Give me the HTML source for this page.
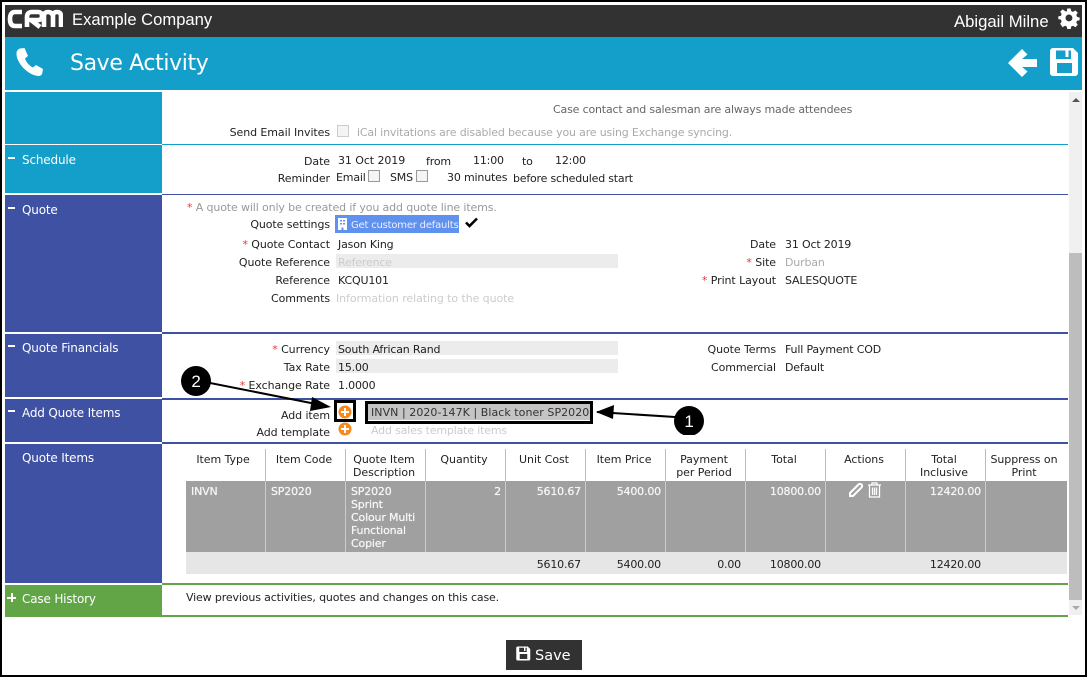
<!DOCTYPE html>
<html><head><meta charset="utf-8"><style>
html,body{margin:0;padding:0;background:#fff}
#p{position:relative;width:1087px;height:677px;overflow:hidden;background:#fff;font:11px/14px "DejaVu Sans",sans-serif;color:#222;letter-spacing:-.17px}
#p div,#p svg{position:absolute}
.t{white-space:nowrap;margin-top:1px}
.r{white-space:nowrap;text-align:right;width:200px;margin-top:1px;letter-spacing:-.08px}
.c{white-space:nowrap;text-align:center;width:80px;margin-top:1px;letter-spacing:-.05px}
.g{color:#aaa}
.s{color:#e33}
.w{color:#fff;font-size:12px}
.gy{background:#ececec;height:14px}
.cb{width:10px;height:10px;border:1px solid #999;background:#f4f4f4}
.d{width:1px;background:#bbb}
#p .e{color:#f6f6f6;text-shadow:0 0 .6px #fff;letter-spacing:-.17px}
</style></head><body><div id="p">
<div style="left:0;top:0;width:1087px;height:2px;background:#000"></div>
<div style="left:0;top:2px;width:2px;height:675px;background:#000"></div>
<div style="left:1085px;top:2px;width:2px;height:675px;background:#000"></div>
<div style="left:0;top:675px;width:1087px;height:2px;background:#000"></div>
<div style="left:2px;top:2px;width:1083px;height:3px;background:#fff"></div>

<div style="left:5px;top:5px;width:1077px;height:32px;background:#323232"></div>
<div style="left:5px;top:37px;width:1077px;height:53px;background:#149fca"></div>

<svg style="left:7px;top:9px" width="56" height="20" viewBox="0 0 56 20"><path d="M15 3H8Q3 3 3 10T8 17H15M20 18V8Q20 3 25 3H31Q35 3 35 7T31 11H24L33 18M37 18V7Q37 3 41 3T46 7V18M46 7Q46 3 50 3T54 7V18" fill="none" stroke="#fff" stroke-width="4.600"/></svg>
<div class="t" style="left:72px;top:9px;font:16.600px/20px 'Liberation Sans',sans-serif;color:#fff;letter-spacing:0">Example Company</div>
<div class="t" style="left:954px;top:11px;font:16.700px/20px 'Liberation Sans',sans-serif;color:#fff;letter-spacing:0">Abigail Milne</div>
<svg style="left:1058px;top:7px" width="22" height="22" viewBox="0 0 22 22"><path fill="#fff" fill-rule="evenodd" d="M9 0h4l.6 3 2.200.9L18.400 2.200l2.800 2.800-1.700 2.600.9 2.200 3 .6v3.200l-3 .6-.9 2.200 1.700 2.600-2.800 2.800-2.600-1.700-2.200.9-.6 3H9l-.6-3-2.200-.9-2.600 1.700L.8 17.800l1.700-2.600-.9-2.200-3-.6V9.200l3-.6.9-2.200L.8 3.800 3.600 1 6.200 2.700 8.400 3.800zM11 7a4 4 0 1 0 0 8 4 4 0 0 0 0-8z" transform="translate(1.500 1.500) scale(.86)"/></svg>

<svg style="left:15px;top:47px" width="30" height="30" viewBox="0 0 30 30"><path fill="#fff" d="M5 1.500 9.500 1l3.500 8-3 2.500c1 3.500 4.500 7.500 8 9l3-2.500 7 4-.8 4.500c-.4 1.500-2 2.500-4 2.500C12.500 28 1 15.500 1.500 6 1.600 3.800 3 2 5 1.500z"/></svg>
<div class="t" style="left:70px;top:49px;font-size:22px;line-height:27px;color:#fff;letter-spacing:-.38px">Save Activity</div>
<svg style="left:1008px;top:48px" width="30" height="30" viewBox="0 0 30 30"><path fill="#fff" d="M0 15 14 1l5.500 5.500L14 11h15v8H14l5.500 4.500L14 29z"/></svg>
<svg style="left:1050px;top:47px" width="29" height="30" viewBox="0 0 29 30"><path fill="#fff" fill-rule="evenodd" d="M3 1h20l5 5v20a3 3 0 0 1-3 3H3a3 3 0 0 1-3-3V4a3 3 0 0 1 3-3zM6 3.500V12h15V3.500h-2.500V10h-3V3.500zM7 16v10h15V16z"/></svg>

<!-- left column -->
<div style="left:5px;top:92px;width:157px;height:52px;background:#149fca"></div>
<div style="left:5px;top:145px;width:157px;height:48px;background:#149fca"></div>
<div style="left:5px;top:195px;width:157px;height:137px;background:#3f51a3"></div>
<div style="left:5px;top:334px;width:157px;height:63px;background:#3f51a3"></div>
<div style="left:5px;top:399px;width:157px;height:43px;background:#3f51a3"></div>
<div style="left:5px;top:444px;width:157px;height:139px;background:#3f51a3"></div>
<div style="left:5px;top:585px;width:157px;height:32px;background:#62a546"></div>

<div style="left:162px;top:144px;width:906px;height:1px;background:#149fca"></div>
<div style="left:162px;top:194px;width:906px;height:1px;background:#3f51a3"></div>
<div style="left:162px;top:332px;width:906px;height:2px;background:#3f51a3"></div>
<div style="left:162px;top:398px;width:906px;height:1.500px;background:#3f51a3"></div>
<div style="left:162px;top:442px;width:906px;height:2px;background:#3f51a3"></div>
<div style="left:162px;top:583px;width:906px;height:2px;background:#62a546"></div>
<div style="left:162px;top:615px;width:906px;height:2px;background:#62a546"></div>

<div style="left:8px;top:157px;width:7px;height:2px;background:#fff"></div>
<div style="left:8px;top:207px;width:7px;height:2px;background:#fff"></div>
<div style="left:8px;top:345px;width:7px;height:2px;background:#fff"></div>
<div style="left:8px;top:410px;width:7px;height:2px;background:#fff"></div>
<div style="left:7px;top:597px;width:9px;height:1.500px;background:#fff"></div>
<div style="left:11px;top:593px;width:1.500px;height:9px;background:#fff"></div>

<div class="t w" style="left:22px;top:152px">Schedule</div>
<div class="t w" style="left:22px;top:202px">Quote</div>
<div class="t w" style="left:22px;top:340px">Quote Financials</div>
<div class="t w" style="left:22px;top:405px">Add Quote Items</div>
<div class="t w" style="left:22px;top:450px">Quote Items</div>
<div class="t w" style="left:22px;top:591px">Case History</div>

<!-- scrollbar -->
<div style="left:1069px;top:92px;width:13px;height:523px;background:#f0f0f0"></div>
<div style="left:1069px;top:253px;width:13px;height:347px;background:#bdbdbd"></div>
<div style="left:1072px;top:98px;width:0;height:0;border-left:4px solid transparent;border-right:4px solid transparent;border-bottom:4px solid #555"></div>
<div style="left:1072px;top:606px;width:0;height:0;border-left:4px solid transparent;border-right:4px solid transparent;border-top:4px solid #aaa"></div>

<!-- invites -->
<div class="t" style="left:553px;top:102px;color:#666">Case contact and salesman are always made attendees</div>
<div class="r" style="left:130px;top:125px">Send Email Invites</div>
<div class="cb" style="left:337px;top:125px;border-color:#ccc"></div>
<div class="t g" style="left:357px;top:125px">iCal invitations are disabled because you are using Exchange syncing.</div>

<!-- schedule -->
<div class="r" style="left:130px;top:154px">Date</div>
<div class="t" style="left:338px;top:153px;letter-spacing:-.08px">31 Oct 2019</div>
<div class="t" style="left:426px;top:154px">from</div>
<div class="t" style="left:473px;top:153px">11:00</div>
<div class="t" style="left:522px;top:154px">to</div>
<div class="t" style="left:555px;top:153px">12:00</div>
<div class="r" style="left:130px;top:171px">Reminder</div>
<div class="t" style="left:336px;top:170px">Email</div>
<div class="cb" style="left:368px;top:170px"></div>
<div class="t" style="left:390px;top:170px">SMS</div>
<div class="cb" style="left:416px;top:170px"></div>
<div class="t" style="left:447px;top:170px">30 minutes</div>
<div class="t" style="left:513px;top:171px;letter-spacing:-.2px">before scheduled start</div>

<!-- quote -->
<div class="t g" style="left:187px;top:200px;color:#999;letter-spacing:-.13px"><span class="s">*</span> A quote will only be created if you add quote line items.</div>
<div class="r" style="left:130px;top:217px">Quote settings</div>
<div style="left:335px;top:215px;width:124px;height:18px;background:#5f92ee"></div>
<svg style="left:338px;top:218px" width="9" height="12" viewBox="0 0 9 12"><path fill="#fff" fill-rule="evenodd" d="M0 0h9v12H5.500V9.500h-2V12H0zM2 2v1.500h2V2zM5 2v1.500h2V2zM2 5v1.500h2V5zM5 5v1.500h2V5z"/></svg>
<div class="t" style="left:351px;top:218px;color:#eef;font-size:10px;letter-spacing:-.2px">Get customer defaults</div>
<svg style="left:465px;top:217px" width="13" height="11" viewBox="0 0 13 11"><path d="M1 5.500 4.500 9 12 1.500" fill="none" stroke="#000" stroke-width="2.600"/></svg>

<div class="r" style="left:130px;top:237px"><span class="s">*</span> Quote Contact</div>
<div class="t" style="left:338px;top:237px">Jason King</div>
<div class="r" style="left:130px;top:255px">Quote Reference</div>
<div class="gy" style="left:336px;top:254px;width:282px"></div>
<div class="t" style="left:338px;top:255px;color:#ccc">Reference</div>
<div class="r" style="left:130px;top:273px">Reference</div>
<div class="t" style="left:338px;top:273px">KCQU101</div>
<div class="r" style="left:130px;top:291px">Comments</div>
<div class="t" style="left:336px;top:291px;color:#ccc;letter-spacing:-.08px">Information relating to the quote</div>

<div class="r" style="left:576px;top:237px">Date</div>
<div class="t" style="left:785px;top:237px">31 Oct 2019</div>
<div class="r" style="left:576px;top:255px"><span class="s">*</span> Site</div>
<div class="t" style="left:785px;top:255px;color:#aaa">Durban</div>
<div class="r" style="left:576px;top:273px"><span class="s">*</span> Print Layout</div>
<div class="t" style="left:785px;top:273px">SALESQUOTE</div>

<!-- financials -->
<div class="r" style="left:130px;top:342px"><span class="s">*</span> Currency</div>
<div class="gy" style="left:336px;top:341px;width:282px"></div>
<div class="t" style="left:338px;top:342px">South African Rand</div>
<div class="r" style="left:130px;top:360px">Tax Rate</div>
<div class="gy" style="left:336px;top:359px;width:282px"></div>
<div class="t" style="left:338px;top:360px">15.00</div>
<div class="r" style="left:130px;top:378px"><span class="s">*</span> Exchange Rate</div>
<div class="t" style="left:338px;top:378px">1.0000</div>
<div class="r" style="left:576px;top:342px">Quote Terms</div>
<div class="t" style="left:785px;top:342px">Full Payment COD</div>
<div class="r" style="left:576px;top:360px">Commercial</div>
<div class="t" style="left:785px;top:360px">Default</div>

<!-- add items -->
<div class="r" style="left:130px;top:408px">Add item</div>
<div class="r" style="left:130px;top:425px">Add template</div>
<div style="left:334px;top:400px;width:16px;height:16px;border:3px solid #000"></div>
<svg style="left:338px;top:405px" width="14" height="14" viewBox="0 0 14 14"><circle cx="7" cy="7" r="6.500" fill="#f58a1f"/><path d="M3 7h8M7 3v8" stroke="#fff" stroke-width="2"/></svg>
<svg style="left:338px;top:422px" width="14" height="14" viewBox="0 0 14 14"><circle cx="7" cy="7" r="6.500" fill="#f58a1f"/><path d="M3 7h8M7 3v8" stroke="#fff" stroke-width="2"/></svg>
<div style="left:368px;top:404px;width:222px;height:16px;background:#c4c4c4"></div>
<div style="left:365px;top:401px;width:222px;height:17px;border:3px solid #000"></div>
<div class="t" style="left:371px;top:405px;color:#333;letter-spacing:.05px">INVN | 2020-147K | Black toner SP2020</div>
<div class="t" style="left:371px;top:423px;color:#ccc">Add sales template items</div>

<!-- annotations -->
<svg style="left:175px;top:365px" width="540" height="70" viewBox="0 0 540 70">
<path d="M20 15 146 40" stroke="#000" stroke-width="2"/>
<path d="M156 42 137 32 135 46z" fill="#000"/>
<path d="M422 47 500 52" stroke="#000" stroke-width="2"/>
<path d="M421 47 439 40 438 54z" fill="#000"/>
<circle cx="21" cy="16" r="15" fill="#000"/>
<circle cx="514" cy="56" r="15" fill="#000"/>
<text x="21" y="22" fill="#fff" font-family="Liberation Sans,sans-serif" font-size="17" text-anchor="middle">2</text>
<text x="514" y="62" fill="#fff" font-family="Liberation Sans,sans-serif" font-size="17" text-anchor="middle">1</text>
</svg>

<!-- table -->
<div style="left:186px;top:481px;width:881px;height:71px;background:#a0a0a0"></div>
<div style="left:186px;top:552px;width:881px;height:22px;background:#e6e6e6"></div>
<div class="d" style="left:265px;top:449px;height:32px"></div>
<div class="d" style="left:345px;top:449px;height:32px"></div>
<div class="d" style="left:425px;top:449px;height:32px"></div>
<div class="d" style="left:505px;top:449px;height:32px"></div>
<div class="d" style="left:585px;top:449px;height:32px"></div>
<div class="d" style="left:665px;top:449px;height:32px"></div>
<div class="d" style="left:745px;top:449px;height:32px"></div>
<div class="d" style="left:825px;top:449px;height:32px"></div>
<div class="d" style="left:905px;top:449px;height:32px"></div>
<div class="d" style="left:985px;top:449px;height:32px"></div>
<div class="d" style="left:265px;top:481px;height:71px;background:#ccc"></div>
<div class="d" style="left:345px;top:481px;height:71px;background:#ccc"></div>
<div class="d" style="left:425px;top:481px;height:71px;background:#ccc"></div>
<div class="d" style="left:505px;top:481px;height:71px;background:#ccc"></div>
<div class="d" style="left:585px;top:481px;height:71px;background:#ccc"></div>
<div class="d" style="left:665px;top:481px;height:71px;background:#ccc"></div>
<div class="d" style="left:745px;top:481px;height:71px;background:#ccc"></div>
<div class="d" style="left:825px;top:481px;height:71px;background:#ccc"></div>
<div class="d" style="left:905px;top:481px;height:71px;background:#ccc"></div>
<div class="d" style="left:985px;top:481px;height:71px;background:#ccc"></div>

<div class="c" style="left:183px;top:452px">Item Type</div>
<div class="c" style="left:264px;top:452px">Item Code</div>
<div class="c" style="left:344px;top:452px;line-height:13px">Quote Item<br>Description</div>
<div class="c" style="left:424px;top:452px">Quantity</div>
<div class="c" style="left:504px;top:452px">Unit Cost</div>
<div class="c" style="left:584px;top:452px">Item Price</div>
<div class="c" style="left:664px;top:452px;line-height:13px">Payment<br>per Period</div>
<div class="c" style="left:744px;top:452px">Total</div>
<div class="c" style="left:824px;top:452px">Actions</div>
<div class="c" style="left:904px;top:452px;line-height:13px">Total<br>Inclusive</div>
<div class="c" style="left:984px;top:452px;line-height:13px">Suppress on<br>Print</div>

<div class="t e" style="left:191px;top:484px">INVN</div>
<div class="t e" style="left:271px;top:484px">SP2020</div>
<div class="t e" style="left:351px;top:484px;line-height:13px">SP2020<br>Sprint<br>Colour Multi<br>Functional<br>Copier</div>
<div class="r e" style="left:301px;top:484px">2</div>
<div class="r e" style="left:381px;top:484px">5610.67</div>
<div class="r e" style="left:461px;top:484px">5400.00</div>
<div class="r e" style="left:621px;top:484px">10800.00</div>
<div class="r e" style="left:781px;top:484px">12420.00</div>
<svg style="left:848px;top:482px" width="16" height="16" viewBox="0 0 16 16"><path d="M2 11 10.500 2.500a2 2 0 0 1 3 3L5 14H2z" fill="none" stroke="#fff" stroke-width="2"/></svg>
<svg style="left:867px;top:482px" width="15" height="16" viewBox="0 0 15 16"><path fill="none" stroke="#fff" stroke-width="1.300" d="M1 3h13M5 3V1h5v2M2.500 3v12h10V3M5.500 5.500v7.500M7.500 5.500v7.500M9.500 5.500v7.500"/></svg>

<div class="r" style="left:381px;top:557px;letter-spacing:-.17px">5610.67</div>
<div class="r" style="left:461px;top:557px;letter-spacing:-.17px">5400.00</div>
<div class="r" style="left:541px;top:557px;letter-spacing:-.17px">0.00</div>
<div class="r" style="left:621px;top:557px;letter-spacing:-.17px">10800.00</div>
<div class="r" style="left:781px;top:557px;letter-spacing:-.17px">12420.00</div>

<div class="t" style="left:186px;top:590px;letter-spacing:-.14px">View previous activities, quotes and changes on this case.</div>

<!-- save -->
<div style="left:506px;top:640px;width:76px;height:30px;background:#323232"></div>
<svg style="left:516px;top:646px" width="15" height="15" viewBox="0 0 29 30"><path fill="#fff" fill-rule="evenodd" d="M3 1h20l5 5v20a3 3 0 0 1-3 3H3a3 3 0 0 1-3-3V4a3 3 0 0 1 3-3zM6 3.500V12h15V3.500h-2.500V10h-3V3.500zM7 16v10h15V16z"/></svg>
<div class="t" style="left:535px;top:646px;font-size:14.500px;line-height:18px;color:#fff;letter-spacing:0">Save</div>
</div></body></html>
